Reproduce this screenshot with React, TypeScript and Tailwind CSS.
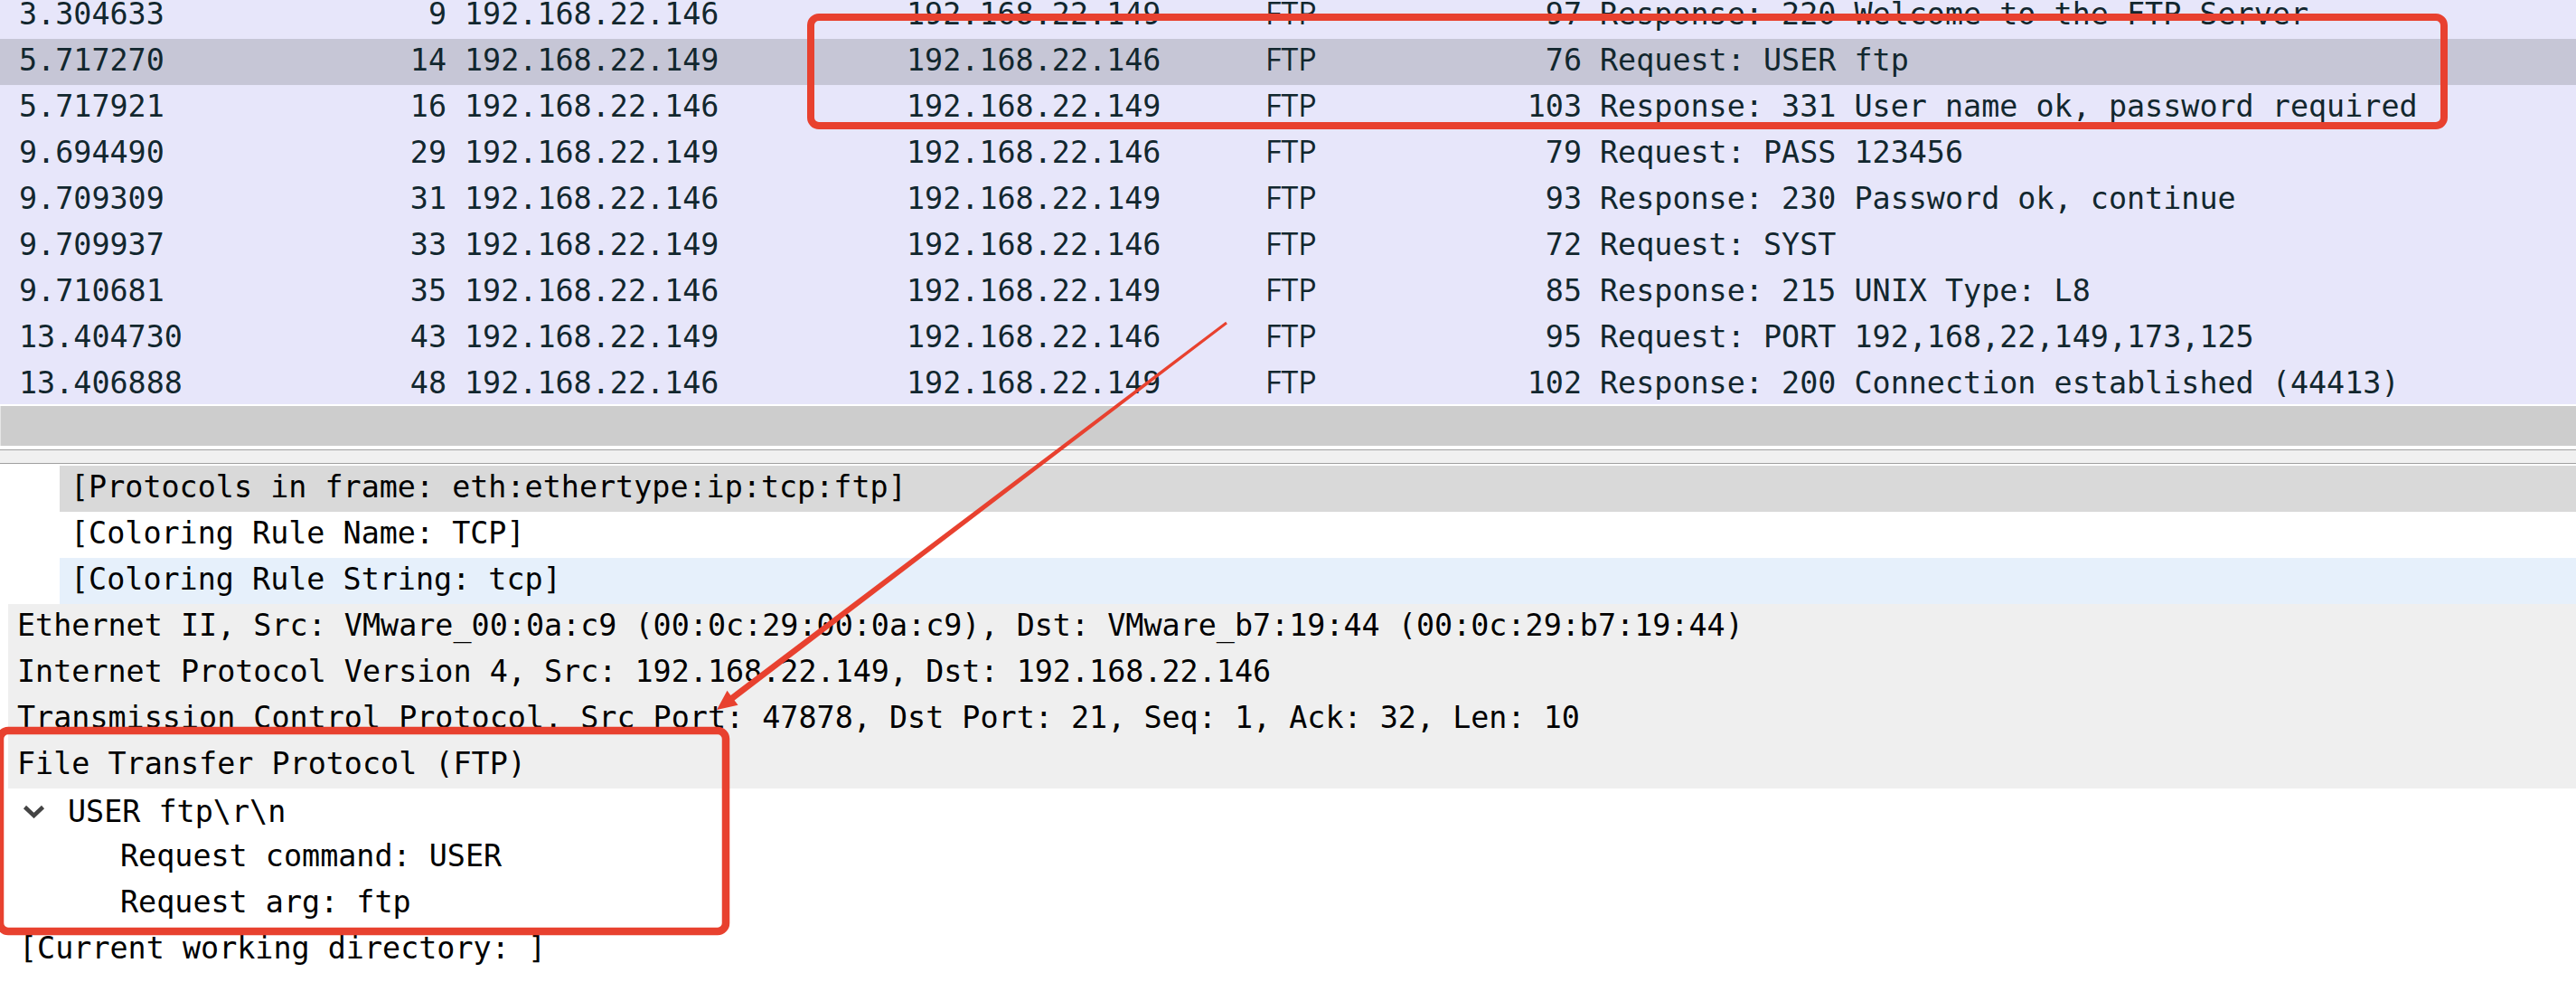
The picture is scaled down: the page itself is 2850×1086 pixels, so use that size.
const PACKETS = [
  { time: '3.304633', no: '9', src: '192.168.22.146', dst: '192.168.22.149', len: '97', info: 'Response: 220 Welcome to the FTP Server' },
  { time: '5.717270', no: '14', src: '192.168.22.149', dst: '192.168.22.146', len: '76', info: 'Request: USER ftp', selected: true },
  { time: '5.717921', no: '16', src: '192.168.22.146', dst: '192.168.22.149', len: '103', info: 'Response: 331 User name ok, password required' },
  { time: '9.694490', no: '29', src: '192.168.22.149', dst: '192.168.22.146', len: '79', info: 'Request: PASS 123456' },
  { time: '9.709309', no: '31', src: '192.168.22.146', dst: '192.168.22.149', len: '93', info: 'Response: 230 Password ok, continue' },
  { time: '9.709937', no: '33', src: '192.168.22.149', dst: '192.168.22.146', len: '72', info: 'Request: SYST' },
  { time: '9.710681', no: '35', src: '192.168.22.146', dst: '192.168.22.149', len: '85', info: 'Response: 215 UNIX Type: L8' },
  { time: '13.404730', no: '43', src: '192.168.22.149', dst: '192.168.22.146', len: '95', info: 'Request: PORT 192,168,22,149,173,125' },
  { time: '13.406888', no: '48', src: '192.168.22.146', dst: '192.168.22.149', len: '102', info: 'Response: 200 Connection established (44413)' },
];

export default function App() {
  return (
    <div className="relative w-[2850px] h-[1086px] overflow-hidden bg-white font-['DejaVu_Sans_Mono',monospace] text-[33.4px]">
      {/* packet list */}
      <div className="h-[447px] overflow-hidden bg-[#e7e6fa] text-[#12272e]">
        <div className="-mt-[8px]">
          {PACKETS.map((p) => (
            <PacketRow key={p.no} p={p} />
          ))}
        </div>
      </div>

      {/* splitter + scrollbar */}
      <div className="h-[2px] bg-white" />
      <div className="h-[44px] bg-[#cdcdcd] border-l border-[#e6e6e6]" />
      <div className="h-[4px] bg-white" />
      <div className="h-[16px] bg-[#f0f0f0] border-y border-[#a0a0a0]" />
      <div className="h-[2px] bg-white" />

      {/* packet details */}
      <div className="text-black">
        <SubRow bg="bg-[#d9d9d9]">[Protocols in frame: eth:ethertype:ip:tcp:ftp]</SubRow>
        <SubRow bg="">[Coloring Rule Name: TCP]</SubRow>
        <SubRow bg="bg-[#e6f0fb]">[Coloring Rule String: tcp]</SubRow>
        <TopRow>Ethernet II, Src: VMware_00:0a:c9 (00:0c:29:00:0a:c9), Dst: VMware_b7:19:44 (00:0c:29:b7:19:44)</TopRow>
        <TopRow>Internet Protocol Version 4, Src: 192.168.22.149, Dst: 192.168.22.146</TopRow>
        <TopRow>Transmission Control Protocol, Src Port: 47878, Dst Port: 21, Seq: 1, Ack: 32, Len: 10</TopRow>
        <TopRow>File Transfer Protocol (FTP)</TopRow>
        <div className="flex items-center h-[51px] leading-[47px]">
          <svg width="25" height="15" viewBox="0 0 25 15" className="ml-[25px] shrink-0">
            <polyline points="2.5,2.5 12.5,12 22.5,2.5" fill="none" stroke="#444" strokeWidth="4.5" />
          </svg>
          <span className="pl-[25px] whitespace-pre">USER ftp\r\n</span>
        </div>
        <div className="h-[51px] leading-[47px] pl-[133px] whitespace-pre">Request command: USER</div>
        <div className="h-[51px] leading-[47px] pl-[133px] whitespace-pre">Request arg: ftp</div>
        <div className="h-[51px] leading-[47px] pl-[21px] whitespace-pre">[Current working directory: ]</div>
      </div>

      {/* annotations drawn over the screenshot */}
      <svg className="absolute left-0 top-0 pointer-events-none" width="2850" height="1086" viewBox="0 0 2850 1086">
        <rect x="897" y="19" width="1807" height="120" rx="9" fill="none" stroke="#e8412f" strokeWidth="8" />
        <rect x="0" y="808" width="803" height="222" rx="9" fill="none" stroke="#e8412f" strokeWidth="8.5" />
        <polygon
          fill="#e8412f"
          points="1356.1,355.8 1357.9,358.2 812.6,774.5 816.5,779.7 793,785 804.5,763.7 808.4,768.9"
        />
      </svg>
    </div>
  );
}

function PacketRow({ p }: { p: (typeof PACKETS)[number] }) {
  return (
    <div className={`flex items-baseline h-[51px] leading-[45px] whitespace-pre ${p.selected ? 'bg-[#c6c6d6]' : ''}`}>
      <span className="w-[301px] pl-[21px] shrink-0">{p.time}</span>
      <span className="w-[193px] text-right shrink-0">{p.no}</span>
      <span className="w-[509px] pl-[20px] shrink-0">{p.src}</span>
      <span className="w-[397px] shrink-0">{p.dst}</span>
      <span className="w-[230px] shrink-0 font-['Open_Sans',sans-serif] text-[34px]">FTP</span>
      <span className="w-[120px] text-right shrink-0">{p.len}</span>
      <span className="pl-[20px]">{p.info}</span>
    </div>
  );
}

function SubRow({ bg, children }: { bg: string; children: React.ReactNode }) {
  return (
    <div className="pl-[66px] h-[51px]">
      <div className={`h-full pl-[12px] leading-[47px] whitespace-pre ${bg}`}>{children}</div>
    </div>
  );
}

function TopRow({ children }: { children: React.ReactNode }) {
  return (
    <div className="pl-[9px] h-[51px]">
      <div className="h-full pl-[10px] leading-[47px] whitespace-pre bg-[#efefef]">{children}</div>
    </div>
  );
}
